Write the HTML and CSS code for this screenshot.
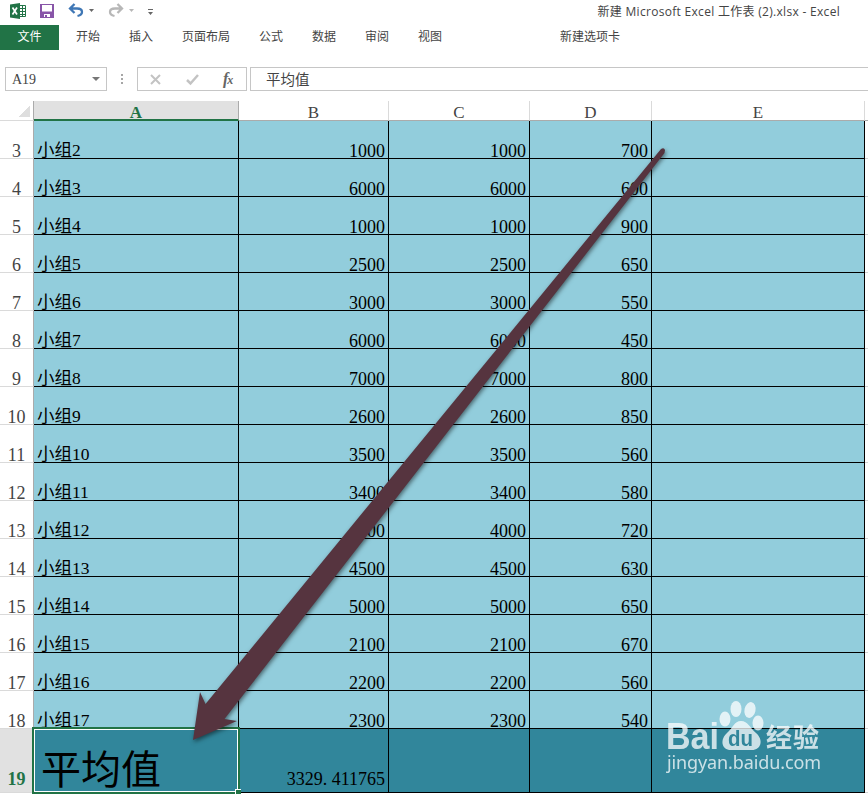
FILE: index.html
```
<!DOCTYPE html>
<html lang="zh-CN">
<head>
  <meta charset="UTF-8" />
  <title>新建 Microsoft Excel 工作表 (2).xlsx - Excel</title>
  <link rel="stylesheet" href="styles.css">
</head>
<body>
  <header class="titlebar">
    <svg class="quick" width="160" height="24" viewBox="0 0 160 24">
      <!-- Excel -->
      <path fill="#fff" stroke="#217346" d="M19 5.500H25.500V16.500H19"/>
      <path stroke="#217346" d="M20 8.500H25M20 11.500H25M20 14.500H25M22.500 6V16"/>
      <path fill="#217346" d="M10 4.500L20 3V19L10 17.500Z"/>
      <path stroke="#fff" stroke-width="1.700" d="M12.500 7.500L17 14.500M17 7.500L12.500 14.500"/>
      <!-- save -->
      <path fill="#8855a8" d="M40 4H54V18H40Z"/>
      <path fill="#fff" d="M42 5H52V11.500H42ZM44 14H50V17H44Z"/>
      <path fill="#8855a8" d="M45 15H47V17H45Z"/>
      <!-- undo / redo -->
      <path fill="none" stroke="#3f77b5" stroke-width="2.300" d="M74.500 4L70 8.500L74.500 13M70.500 8.500H77Q82 8.500 82 12Q82 15 77.500 16"/>
      <path fill="#666" d="M89 9H94L91.500 12Z"/>
      <path fill="none" stroke="#b7b7b7" stroke-width="2.300" d="M117.500 4L122 8.500L117.500 13M121.500 8.500H115Q110 8.500 110 12Q110 15 114.500 16"/>
      <path fill="#b7b7b7" d="M129 9H134L131.500 12Z"/>
      <path fill="#666" d="M148 9H153V10H148ZM148 12H153L150.500 15Z"/>
    </svg>
    <span class="title">新建 Microsoft Excel 工作表 (2).xlsx - Excel</span>
  </header>

  <nav class="tabs">
    <a class="file">文件</a>
    <a>开始</a>
    <a>插入</a>
    <a>页面布局</a>
    <a>公式</a>
    <a>数据</a>
    <a>审阅</a>
    <a>视图</a>
    <a class="custom">新建选项卡</a>
  </nav>

  <div class="formula-bar">
    <div class="name-box">A19<i class="caret"></i></div>
    <svg class="dots" width="30" height="24"><path fill="#a6a6a6" d="M14 7h2v2h-2zM14 11h2v2h-2zM14 15h2v2h-2z"/></svg>
    <div class="fx-box">
      <svg width="108" height="22" viewBox="0 0 108 22">
        <path stroke="#c3c3c3" stroke-width="2" d="M13 7L22 16M22 7L13 16"/>
        <path fill="none" stroke="#c3c3c3" stroke-width="2.500" d="M49 12L52.500 15.500L60 7"/>
        <text class="fx" x="85" y="16">f<tspan class="fx-small" dx="-1">x</tspan></text>
      </svg>
    </div>
    <div class="formula">平均值</div>
  </div>

  <div class="sheet">
    <table>
      <colgroup>
        <col class="c-num"><col class="c-a"><col class="c-b"><col class="c-c"><col class="c-d"><col class="c-e"><col>
      </colgroup>
      <thead>
        <tr><th class="corner"></th><th class="active">A</th><th>B</th><th>C</th><th>D</th><th>E</th><th></th></tr>
      </thead>
      <tbody>
        <tr><th>3</th><td>小组2</td><td>1000</td><td>1000</td><td>700</td><td></td><td></td></tr>
        <tr><th>4</th><td>小组3</td><td>6000</td><td>6000</td><td>600</td><td></td><td></td></tr>
        <tr><th>5</th><td>小组4</td><td>1000</td><td>1000</td><td>900</td><td></td><td></td></tr>
        <tr><th>6</th><td>小组5</td><td>2500</td><td>2500</td><td>650</td><td></td><td></td></tr>
        <tr><th>7</th><td>小组6</td><td>3000</td><td>3000</td><td>550</td><td></td><td></td></tr>
        <tr><th>8</th><td>小组7</td><td>6000</td><td>6000</td><td>450</td><td></td><td></td></tr>
        <tr><th>9</th><td>小组8</td><td>7000</td><td>7000</td><td>800</td><td></td><td></td></tr>
        <tr><th>10</th><td>小组9</td><td>2600</td><td>2600</td><td>850</td><td></td><td></td></tr>
        <tr><th>11</th><td>小组10</td><td>3500</td><td>3500</td><td>560</td><td></td><td></td></tr>
        <tr><th>12</th><td>小组11</td><td>3400</td><td>3400</td><td>580</td><td></td><td></td></tr>
        <tr><th>13</th><td>小组12</td><td>4000</td><td>4000</td><td>720</td><td></td><td></td></tr>
        <tr><th>14</th><td>小组13</td><td>4500</td><td>4500</td><td>630</td><td></td><td></td></tr>
        <tr><th>15</th><td>小组14</td><td>5000</td><td>5000</td><td>650</td><td></td><td></td></tr>
        <tr><th>16</th><td>小组15</td><td>2100</td><td>2100</td><td>670</td><td></td><td></td></tr>
        <tr><th>17</th><td>小组16</td><td>2200</td><td>2200</td><td>560</td><td></td><td></td></tr>
        <tr><th>18</th><td>小组17</td><td>2300</td><td>2300</td><td>540</td><td></td><td></td></tr>
        <tr class="average"><th>19</th><td>平均值</td><td>3329<span class="dot">.</span>411765</td><td></td><td></td><td></td><td></td></tr>
      </tbody>
    </table>
    <div class="selection"><i class="handle"></i></div>

    <svg class="arrow" width="868" height="693" viewBox="0 101 868 693">
      <path fill="#56343f" d="M661 149Q664 147 665 150L664.500 153L224.500 719L237 721L193 740L200 692L205.500 704Z"/>
    </svg>

    <svg class="watermark" width="170" height="84" viewBox="660 696 170 84">
      <g fill="#fff">
        <ellipse cx="725" cy="719" rx="5.500" ry="7.500"/>
        <ellipse cx="736" cy="709" rx="5.500" ry="8"/>
        <ellipse cx="750" cy="710" rx="5.500" ry="8" transform="rotate(12 750 710)"/>
        <ellipse cx="758" cy="723" rx="5.500" ry="7.500"/>
        <path d="M741 721C748 721 750 728 756 733C764 740 761 750 752 750H731C721 750 720 739 727 733C733 728 734 721 741 721Z"/>
        <text class="wm-bai" x="666" y="749" textLength="53" lengthAdjust="spacingAndGlyphs">Bai</text>
        <text class="wm-cn" x="766" y="747" textLength="53">经验</text>
        <text class="wm-url" x="667" y="769" textLength="154">jingyan.baidu.com</text>
      </g>
      <text class="wm-du" x="728" y="746" textLength="25" lengthAdjust="spacingAndGlyphs">du</text>
    </svg>
  </div>
</body>
</html>
```
FILE: styles.css
```
* {
  box-sizing: border-box;
}
body {
  margin: 0;
  height: 794px;
  overflow: hidden;
  background: #fff;
  color: #444;
  font-family: "Noto Sans", "Noto Sans CJK SC", sans-serif;
  font-size: 12px;
}
.titlebar {
  display: flex;
  justify-content: space-between;
  height: 25px;
  padding-right: 28px;
}
.title {
  line-height: 23px;
  font-family: "Open Sans", "Noto Sans CJK SC", sans-serif;
  letter-spacing: 0.3px;
}
.tabs {
  display: flex;
  height: 25px;
  line-height: 24px;
  gap: 29px;
}
.tabs .file {
  width: 59px;
  margin-right: -12px;
  background: #217346;
  color: #fff;
  text-align: center;
}
.tabs .custom {
  margin-left: 89px;
}
.formula-bar {
  display: flex;
  height: 51px;
  padding: 17px 0 10px 5px;
}
.name-box {
  display: flex;
  justify-content: space-between;
  align-items: center;
  width: 102px;
  padding: 2px 6px 0 6px;
  border: 1px solid #c6c6c6;
  font: 14px "Liberation Serif", serif;
}
.caret {
  margin-top: -3px;
  border: 4px solid transparent;
  border-top-color: #777;
  border-bottom: 0;
}
.fx-box {
  width: 110px;
  border: 1px solid #c6c6c6;
}
.fx-box svg {
  display: block;
}
.fx {
  font: italic bold 16px "Liberation Serif", serif;
  fill: #666;
}
.fx-small {
  font-size: 12px;
}
.formula {
  flex: 1;
  margin-left: 3px;
  padding-left: 15px;
  border: 1px solid #c6c6c6;
  border-right: 0;
  font-size: 14.500px;
  line-height: 22px;
}
.sheet {
  position: relative;
  height: 693px;
}
table {
  width: 868px;
  table-layout: fixed;
  border-collapse: separate;
  border-spacing: 0;
  font: 18px "Liberation Serif", "Noto Sans CJK SC", serif;
}
.c-num { width: 34px; }
.c-a { width: 205px; }
.c-b { width: 150px; }
.c-c { width: 141px; }
.c-d { width: 122px; }
.c-e { width: 213px; }
th, td {
  padding: 0;
  white-space: nowrap;
}
thead th {
  height: 20px;
  padding-top: 5px;
  border-bottom: 1px solid #ababab;
  border-right: 1px solid #dadada;
  font-size: 17px;
  font-weight: normal;
  line-height: 13px;
  vertical-align: top;
}
thead th:last-child {
  border-right: 0;
}
thead .corner {
  background: linear-gradient(135deg, #fff 50%, #dedede 50%) 18px 5px / 12px 11px no-repeat;
  border-color: #ababab;
  border-bottom-color: #dadada;
}
thead .active {
  background: #e1e1e1;
  border-bottom: 2px solid #217346;
  border-right-color: #ababab;
  color: #217346;
  font-weight: bold;
}
tbody th {
  height: 38px;
  border-right: 1px solid #ababab;
  border-bottom: 1px solid #dadada;
  font-weight: normal;
  vertical-align: bottom;
  line-height: 13px;
}
tbody td {
  height: 38px;
  padding-right: 3px;
  border-right: 1px solid #000;
  border-bottom: 1px solid #000;
  background: #92cddc;
  color: #000;
  text-align: right;
  vertical-align: bottom;
  line-height: 13px;
}
tbody td:nth-child(2) {
  padding: 0 0 1px 3px;
  text-align: left;
  font-size: 17.500px;
}
tbody td:last-child {
  background: #fff;
  border-right: 0;
  border-bottom-color: #d4d4d4;
}
.average th, .average td {
  height: 64px;
  padding-bottom: 6px;
}
.average th {
  background: #e1e1e1;
  color: #217346;
  font-weight: bold;
}
.average td {
  background: #31869b;
}
.average td:last-child {
  background: #fff;
}
.average td:nth-child(2) {
  padding: 0 0 0 7px;
  font-size: 40px;
  line-height: 42px;
}
.dot {
  display: inline-block;
  width: 9px;
  text-align: left;
}
.selection {
  position: absolute;
  left: 32px;
  top: 626px;
  width: 208px;
  height: 67px;
  border: 2px solid #217346;
  outline: 1px solid #fff;
  outline-offset: -3px;
}
.handle {
  position: absolute;
  right: -3px;
  bottom: -3px;
  width: 6px;
  height: 6px;
  border: 1px solid #fff;
  border-width: 1px 0 0 1px;
  background: #217346;
}
.arrow {
  position: absolute;
  left: 0;
  top: 0;
  filter: drop-shadow(1px 2px 2px rgba(0, 0, 0, 0.5));
}
.watermark {
  position: absolute;
  left: 660px;
  top: 595px;
  opacity: 0.75;
}
.wm-bai {
  font: bold 36px "Liberation Sans", sans-serif;
}
.wm-cn {
  font: bold 26px "Noto Sans CJK SC", sans-serif;
}
.wm-url {
  font: 18px "Noto Sans", sans-serif;
}
.wm-du {
  font: bold 22px "Liberation Sans", sans-serif;
  fill: #31869b;
}
```
